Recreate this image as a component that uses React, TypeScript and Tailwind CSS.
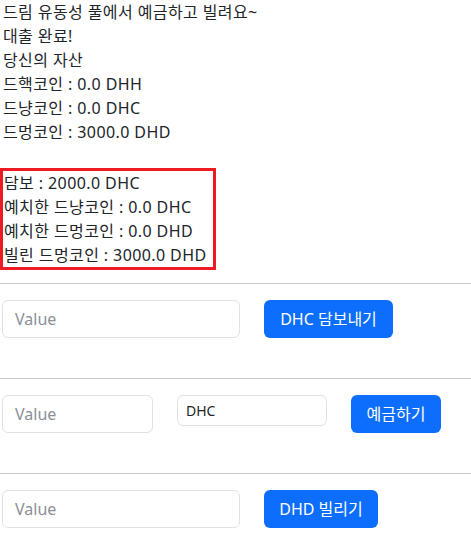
import React from 'react'

const font = { fontFamily: '"Noto Sans", "Noto Sans CJK KR", sans-serif' }

function Field({ w, placeholder }: { w: string; placeholder: string }) {
  return (
    <input
      className={`${w} h-[38px] rounded-[6px] border border-[#dee2e6] bg-white px-3 text-base text-[#212529] placeholder:text-[#8a9098] outline-none`}
      placeholder={placeholder}
      style={font}
    />
  )
}

function Btn({ w, label }: { w: string; label: string }) {
  return (
    <button className={`${w} h-[38px] rounded-[6px] bg-[#0d6efd] px-3 text-base text-white`} style={font}>
      {label}
    </button>
  )
}

export default function App() {
  return (
    <div className="bg-white text-base leading-6 text-[#212529]" style={font}>
      <div className="pl-[3px] tracking-[0.4px]">
        <div>드림 유동성 풀에서 예금하고 빌려요~</div>
        <div>대출 완료!</div>
        <div>당신의 자산</div>
        <div>드핵코인 : 0.0 DHH</div>
        <div>드냥코인 : 0.0 DHC</div>
        <div>드멍코인 : 3000.0 DHD</div>
      </div>
      <div className="h-6" />
      <div className="w-[216px] border-[3px] border-[#ed1c24] pl-[1px] tracking-[0.4px]">
        <div>담보 : 2000.0 DHC</div>
        <div>예치한 드냥코인 : 0.0 DHC</div>
        <div>예치한 드멍코인 : 0.0 DHD</div>
        <div>빌린 드멍코인 : 3000.0 DHD</div>
      </div>

      <hr className="mt-[13px] border-t border-[#c9c9c9]" />
      <div className="mt-4 flex items-start gap-6 pl-[2px]">
        <Field w="w-[238px]" placeholder="Value" />
        <Btn w="w-[129px]" label="DHC 담보내기" />
      </div>

      <hr className="mt-10 border-t border-[#c9c9c9]" />
      <div className="mt-4 flex items-start gap-6 pl-[2px]">
        <Field w="w-[151px]" placeholder="Value" />
        <input
          className="h-[31px] w-[150px] rounded-[6px] border border-[#dee2e6] bg-white px-2 text-sm text-[#212529] outline-none"
          defaultValue="DHC"
          style={font}
        />
        <Btn w="w-[90px]" label="예금하기" />
      </div>

      <hr className="mt-10 border-t border-[#c9c9c9]" />
      <div className="mt-4 flex items-start gap-6 pl-[2px]">
        <Field w="w-[238px]" placeholder="Value" />
        <Btn w="w-[114px]" label="DHD 빌리기" />
      </div>
    </div>
  )
}
